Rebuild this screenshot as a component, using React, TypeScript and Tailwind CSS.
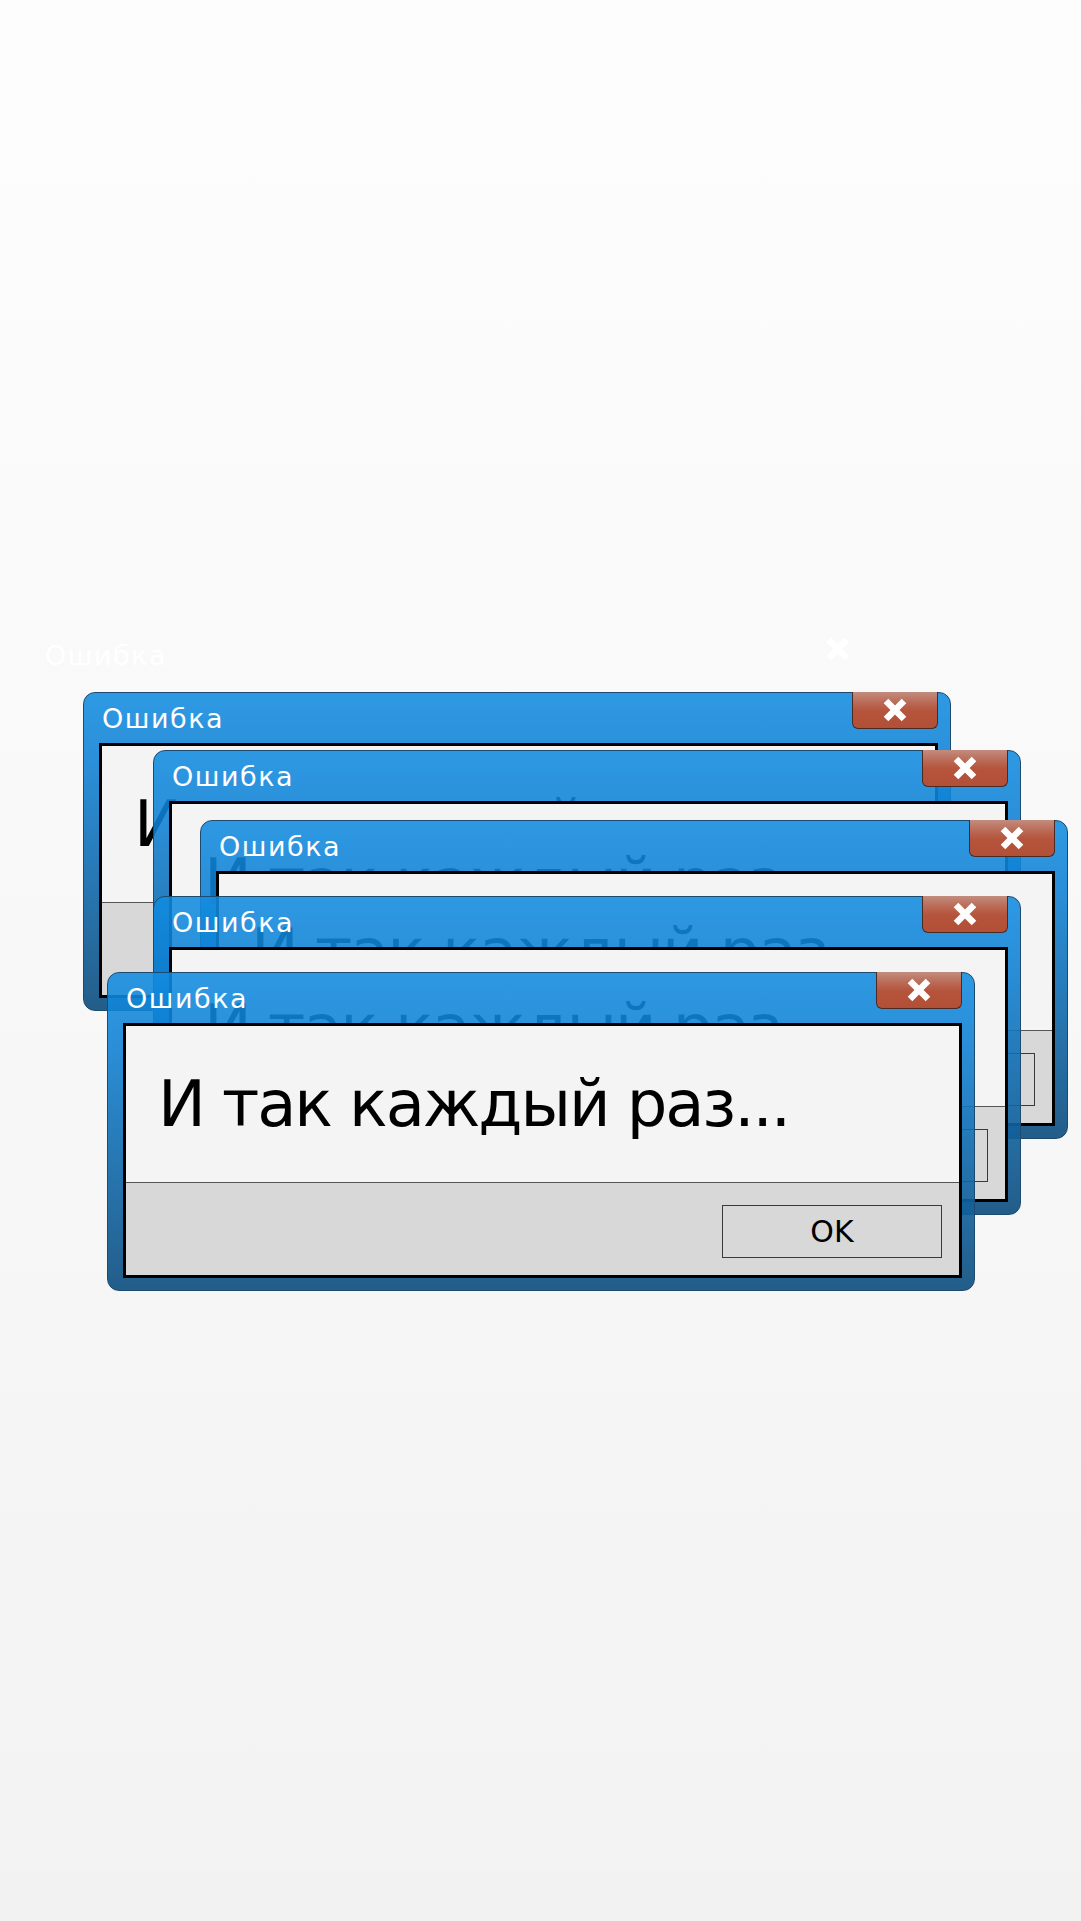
const FONT = "font-['DejaVu_Sans',sans-serif]"

const WINDOWS = [
  { id: 'a', pos: 'left-[83px] top-[692px]' },
  { id: 'b', pos: 'left-[153px] top-[750px]' },
  { id: 'c', pos: 'left-[200px] top-[820px]' },
  { id: 'd', pos: 'left-[153px] top-[896px]' },
  { id: 'e', pos: 'left-[107px] top-[972px]' },
]

function CrossIcon() {
  return (
    <svg width="26" height="26" viewBox="0 0 26 26" aria-hidden="true">
      <path d="M4 4L22 22M22 4L4 22" stroke="white" strokeWidth="6.5" />
    </svg>
  )
}

function ErrorWindow({ pos }: { pos: string }) {
  return (
    <div
      className={`absolute ${pos} flex h-[319px] w-[868px] flex-col rounded-[12px] border border-[#1d4a6f] bg-[linear-gradient(180deg,rgba(18,140,224,0.88)_0%,rgba(14,128,212,0.88)_22%,rgba(19,82,129,0.93)_100%)]`}
    >
      <div className="relative flex h-[50px] items-center pl-[18px]">
        <span className={`${FONT} text-[27px] leading-none tracking-[1.5px] text-white`}>Ошибка</span>
        <div className="absolute -top-px right-[12px] flex h-[37px] w-[86px] items-center justify-center rounded-b-[6px] border border-t-0 border-[#4a2a22] bg-[linear-gradient(180deg,#c28c7e_0%,#b9644e_35%,#b5533b_55%,#b24f37_100%)]">
          <CrossIcon />
        </div>
      </div>
      <div className="ml-[15px] mr-[12px] flex flex-col border-[3px] border-black">
        <div className="flex h-[156px] items-center bg-[#f4f4f4] pl-[32px]">
          <span className={`${FONT} text-[64px] leading-none tracking-[-2.1px] text-black`}>И так каждый раз...</span>
        </div>
        <div className="flex h-[93px] items-start justify-end border-t border-[#555] bg-[#d8d8d8] pr-[17px] pt-[22px]">
          <div className="flex h-[53px] w-[220px] items-center justify-center border border-[#3a3a3a] bg-[#d8d8d8]">
            <span className={`${FONT} text-[30px] leading-none text-black`}>OK</span>
          </div>
        </div>
      </div>
    </div>
  )
}

export default function App() {
  return (
    <div className="relative h-[1921px] w-[1081px] overflow-hidden bg-[linear-gradient(180deg,#fdfdfd_0%,#f8f8f8_50%,#f2f2f2_100%)]">
      {/* fading-in window: only its white text is left */}
      <div className="absolute left-[26px] top-[630px] h-[319px] w-[868px]">
        <div className="relative flex h-[50px] items-center pl-[19px]">
          <span className={`${FONT} text-[27px] leading-none tracking-[1.5px] text-white`}>Ошибка</span>
          <div className="absolute right-[13px] top-0 flex h-[37px] w-[86px] items-center justify-center">
            <CrossIcon />
          </div>
        </div>
      </div>
      {WINDOWS.map((w) => (
        <ErrorWindow key={w.id} pos={w.pos} />
      ))}
    </div>
  )
}
